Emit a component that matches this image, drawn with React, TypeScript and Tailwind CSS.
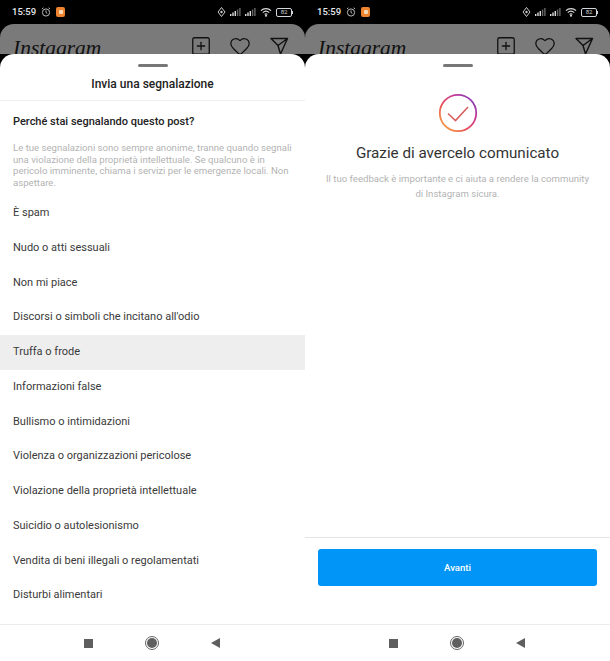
import { Heart, SquarePlus } from "lucide-react";

const reasons = [
  "È spam",
  "Nudo o atti sessuali",
  "Non mi piace",
  "Discorsi o simboli che incitano all'odio",
  "Truffa o frode",
  "Informazioni false",
  "Bullismo o intimidazioni",
  "Violenza o organizzazioni pericolose",
  "Violazione della proprietà intellettuale",
  "Suicidio o autolesionismo",
  "Vendita di beni illegali o regolamentati",
  "Disturbi alimentari",
];

function StatusBar() {
  return (
    <div className="flex h-6 shrink-0 items-center justify-between bg-black pl-3 pr-[12px] text-white">
      <div className="flex items-center gap-[5px]">
        <span className="text-[9.5px] font-medium text-gray-200">15:59</span>
        <svg width="10" height="10" viewBox="0 0 10 10" fill="none" stroke="#bbb" strokeWidth="1">
          <circle cx="5" cy="5.5" r="3.6" />
          <path d="M5 3.5v2l1.3 1M1 1.8 2.4.8M9 1.8 7.6.8" />
        </svg>
        <div className="flex h-[10px] w-[9px] items-center justify-center rounded-[2px] bg-[#ee8330]">
          <div className="h-[4px] w-[4px] rounded-[1px] bg-[#f7d9b5]" />
        </div>
      </div>
      <div className="flex items-center gap-[4px]">
        <svg width="9" height="10" viewBox="0 0 9 10" fill="none" stroke="#ccc" strokeWidth="1">
          <path d="M4.5.5 8 5 4.5 9.5 1 5z" />
          <circle cx="4.5" cy="5" r="1.2" fill="#ccc" stroke="none" />
        </svg>
        <SignalBars />
        <SignalBars />
        <svg width="12" height="10" viewBox="0 0 13 10" fill="none" stroke="#ddd" strokeWidth="1.2">
          <path d="M1 3.5c3-2.8 8-2.8 11 0M3 5.6c2-1.7 5-1.7 7 0M5 7.6c.9-.7 2.1-.7 3 0" />
          <circle cx="6.5" cy="9" r=".5" fill="#ddd" />
        </svg>
        <div className="flex items-center">
          <div className="flex h-[9px] w-[16px] items-center justify-center rounded-[2px] border border-gray-300 text-[6px] leading-none text-gray-300">
            82
          </div>
          <div className="h-[3px] w-[1px] bg-gray-300" />
        </div>
      </div>
    </div>
  );
}

function SignalBars() {
  return (
    <svg width="11" height="8" viewBox="0 0 11 8">
      <rect x="0" y="6" width="1.4" height="2" fill="#ddd" />
      <rect x="2.3" y="4.5" width="1.4" height="3.5" fill="#ddd" />
      <rect x="4.6" y="3" width="1.4" height="5" fill="#ddd" />
      <rect x="6.9" y="1.5" width="1.4" height="6.5" fill="#666" />
      <rect x="9.2" y="0" width="1.4" height="8" fill="#666" />
    </svg>
  );
}

function IgHeader() {
  return (
    <div className="flex h-[50px] shrink-0 items-start justify-between rounded-t-[14px] bg-[#7a7a7a] pl-[13px] pr-[15px] pt-[11px] text-[#111]">
      <span className="font-['Liberation_Serif',serif] text-[21.5px] italic leading-[26px]">Instagram</span>
      <div className="flex items-center gap-[17px]">
        <SquarePlus size={22} strokeWidth={1.4} />
        <Heart size={22} strokeWidth={1.4} />
        <svg width="22" height="22" viewBox="0 0 22 22" fill="none" stroke="currentColor" strokeWidth="1.4" strokeLinejoin="round">
          <path d="M3 3.5h16.5L12.5 19 10 10.5zM10 10.5 19.5 3.5" />
        </svg>
      </div>
    </div>
  );
}

function NavBar() {
  return (
    <div className="flex h-[37px] shrink-0 items-center justify-center gap-[52px] border-t border-[#ececec] bg-white pr-[1px]">
      <div className="h-[9px] w-[9px] bg-[#5f5f5f]" />
      <div className="flex h-[14px] w-[14px] items-center justify-center rounded-full border border-[#666]">
        <div className="h-[10px] w-[10px] rounded-full bg-[#5f5f5f]" />
      </div>
      <svg width="9" height="10" viewBox="0 0 9 10">
        <path d="M9 0v10L0 5z" fill="#5f5f5f" />
      </svg>
    </div>
  );
}

function Handle() {
  return <div className="mx-auto mt-[10px] h-[3px] w-[30px] shrink-0 rounded-full bg-[#777]" />;
}

function ReportPanel() {
  return (
    <div className="flex min-h-0 flex-1 flex-col rounded-t-[14px] bg-white">
      <Handle />
      <div className="flex h-[34px] shrink-0 items-center justify-center border-b border-[#efefef] pt-[5px] pb-[5px] text-[12px] font-medium text-[#222]">
        Invia una segnalazione
      </div>
      <div className="px-[13px] pt-[14px]">
        <h2 className="text-[11px] font-medium leading-[14px] text-[#222]">Perché stai segnalando questo post?</h2>
        <p className="mt-[13px] text-[9.6px] leading-[11.5px] text-[#b3b3b3]">
          Le tue segnalazioni sono sempre anonime, tranne quando segnali una violazione della proprietà intellettuale. Se qualcuno è in pericolo imminente, chiama i servizi per le emergenze locali. Non aspettare.
        </p>
      </div>
      <ul className="mt-[8px]">
        {reasons.map((r) => (
          <li
            key={r}
            className={`flex h-[34.75px] items-center px-[13px] text-[11px] text-[#3a3a3a] ${r === "Truffa o frode" ? "bg-[#eeeeee]" : ""}`}
          >
            {r}
          </li>
        ))}
      </ul>
    </div>
  );
}

function ThanksPanel() {
  return (
    <div className="flex min-h-0 flex-1 flex-col rounded-t-[14px] bg-white">
      <Handle />
      <div className="flex flex-1 flex-col items-center pt-[26px]">
        <svg width="40" height="40" viewBox="0 0 40 40" fill="none">
          <defs>
            <linearGradient id="ring" x1="0" y1="1" x2="1" y2="0">
              <stop offset="0" stopColor="#f9b43c" />
              <stop offset="0.4" stopColor="#e8505b" />
              <stop offset="0.7" stopColor="#c13a9b" />
              <stop offset="1" stopColor="#6a3fc8" />
            </linearGradient>
          </defs>
          <circle cx="20" cy="20" r="18.2" stroke="url(#ring)" strokeWidth="1.8" />
          <path d="M10 20.5 17.5 27.5 30 14" stroke="#d9605f" strokeWidth="1.6" />
        </svg>
        <h2 className="mt-[10px] text-[15.2px] leading-[20px] text-[#333]">Grazie di avercelo comunicato</h2>
        <p className="mt-[8px] text-center text-[9.6px] leading-[15px] text-[#b3b3b3]">
          Il tuo feedback è importante e ci aiuta a rendere la community
          <br />
          di Instagram sicura.
        </p>
      </div>
      <div className="h-[87px] shrink-0 border-t border-[#e5e5e5] px-[13px] pt-[11px]">
        <button className="flex h-[37px] w-full items-center justify-center rounded-[3px] bg-[#0095f6] pt-[1px] text-[9.6px] font-medium text-white">
          Avanti
        </button>
      </div>
    </div>
  );
}

function Phone({ children }: { children: React.ReactNode }) {
  return (
    <div className="flex h-[661px] w-[305px] flex-col bg-black">
      <StatusBar />
      <div className="relative flex min-h-0 flex-1 flex-col">
        <div className="h-[30px] shrink-0 overflow-hidden">
          <IgHeader />
        </div>
        {children}
      </div>
      <NavBar />
    </div>
  );
}

export default function App() {
  return (
    <div className="flex w-[610px] font-['Roboto',sans-serif]">
      <Phone>
        <ReportPanel />
      </Phone>
      <Phone>
        <ThanksPanel />
      </Phone>
    </div>
  );
}
